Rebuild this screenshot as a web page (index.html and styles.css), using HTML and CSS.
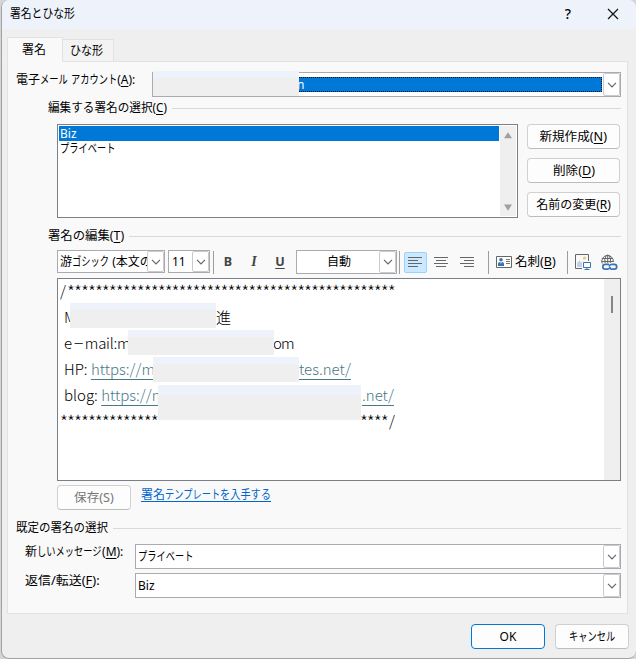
FILE: index.html
```html
<!DOCTYPE html>
<html lang="ja">
<head>
<meta charset="utf-8">
<title>署名とひな形</title>
<link rel="stylesheet" href="styles.css">
</head>
<body>
<div class="dialog">
  <header class="titlebar">
    <span class="title"><span class="t-title">署名とひな形</span></span>
    <span class="help">?</span>
    <svg class="close" width="12" height="12" viewBox="0 0 12 12"><path d="M1 1L11 11M11 1L1 11"/></svg>
  </header>
  <nav class="tabs">
    <div class="tab active">署名</div>
    <div class="tab"><span class="t-tab">ひな形</span></div>
  </nav>
  <main class="panel">
    <div class="row account">
      <label>電子<span class="kana k3">メール</span> <span class="kana k5">アカウント</span>(<u>A</u>):</label>
      <div class="combo">
        <div class="account-value"><span>n</span></div>
        <div class="drop"><svg width="10" height="6" viewBox="0 0 10 6"><path d="M1 .8L5 4.8L9 .8"/></svg></div>
        <div class="mask mask-account"></div>
      </div>
    </div>
    <div class="legend inset pick"><span class="t-pick">編集する署名の選択(<u>C</u>)</span><i></i></div>
    <div class="row signatures">
      <div class="list">
        <div class="items"><div class="item selected">Biz</div><div class="item"><span class="kana k6">プライベート</span></div></div>
        <div class="scroll">
          <svg width="10" height="7" viewBox="0 0 10 7"><path d="M5 0.3L9 6.2H1Z"/></svg>
          <svg width="10" height="7" viewBox="0 0 10 7"><path d="M1 .5H9L5 6.7Z"/></svg>
        </div>
      </div>
      <div class="actions">
        <div class="button"><span class="wide">新規作成(<u>N</u>)</span></div>
        <div class="button"><span class="wide">削除(<u>D</u>)</span></div>
        <div class="button">名前の変更(<u>R</u>)</div>
      </div>
    </div>
    <div class="legend inset edit"><span class="t-edit">署名の編集(<u>T</u>)</span><i></i></div>
    <div class="toolbar">
      <div class="combo font"><span class="value">游<span class="kana k4">ゴシック</span> (本文の</span><div class="drop"><svg width="10" height="6" viewBox="0 0 10 6"><path d="M1 .8L5 4.8L9 .8"/></svg></div></div>
      <div class="combo size"><span class="value">11</span><div class="drop"><svg width="10" height="6" viewBox="0 0 10 6"><path d="M1 .8L5 4.8L9 .8"/></svg></div></div>
      <i class="sep"></i>
      <span class="format bold">B</span><span class="format italic">I</span><span class="format under">U</span>
      <div class="combo color"><span class="value">自動</span><div class="drop"><svg width="10" height="6" viewBox="0 0 10 6"><path d="M1 .8L5 4.8L9 .8"/></svg></div></div>
      <i class="sep"></i>
      <div class="align on"><svg width="15" height="12" viewBox="0 0 15 12"><path d="M0 1.5H14M0 4.5H10M0 7.5H14M0 10.5H10"/></svg></div>
      <div class="align"><svg width="15" height="12" viewBox="0 0 15 12"><path d="M0 1.5H14M2 4.5H12M0 7.5H14M2 10.5H12"/></svg></div>
      <div class="align last"><svg width="15" height="12" viewBox="0 0 15 12"><path d="M0 1.5H14M4 4.5H14M0 7.5H14M4 10.5H14"/></svg></div>
      <i class="sep"></i>
      <svg class="card-icon" width="16" height="12" viewBox="0 0 16 12"><path d="M.5.5H15.5V11.5H.5Z" fill="#fff" stroke="#666"/><circle cx="5" cy="3.7" r="1.8" fill="#3670af"/><path d="M2 10V8Q2 6 4 6H6Q8 6 8 8V10Z" fill="#3670af"/><path d="M4.2 6H5.8L5 8Z" fill="#fff"/><path d="M10 3.5H14M10 5.5H14M10 7.5H14" stroke="#777"/></svg>
      <span class="card-label">名刺(<u>B</u>)</span>
      <i class="sep"></i>
      <svg class="picture-icon" width="17" height="17" viewBox="0 0 17 17"><path d="M7 14.5H.5V.5H13.5V7" fill="none" stroke="#666"/><circle cx="9.5" cy="4" r="1.6" fill="#efc47e"/><path d="M2 13V9L4.5 6.5L7 9V13Z" fill="#c2d1e5"/><path d="M8.5 8.5H15.5V13.5H8.5Z" fill="#fff" stroke="#3973b5"/><path d="M12 14V16M9.5 15.5H14.5" fill="none" stroke="#3973b5"/></svg>
      <svg class="link-icon" width="17" height="17" viewBox="0 0 17 17"><g fill="none" stroke="#666"><path d="M1.2 9.5A5.8 5.8 0 1 1 12.3 8M1.2 4.5H12M.8 7.5H12.2M4.2 9.5Q2.8 5 5.4 1M6.7.5V9M9.2 9Q10.5 5 8 1"/></g><path d="M3 9H16V16H3Z" fill="#f9f9f9"/><g fill="none" stroke="#3973b5" stroke-width="1.7"><path d="M8 10.3H4.2A2.4 2.4 0 0 0 4.2 15.1H6.8Q8.8 15.1 9.4 13M9.3 15.1H13.3A2.4 2.4 0 0 0 13.3 10.3H10.7Q8.7 10.3 8.1 12.4"/></g></svg>
    </div>
    <div class="editor">
      <div class="text">
        <p class="edge"><b class="slash">/</b><b class="stars">***********************************************</b></p>
        <p><span class="c-name">M</span><span>進</span></p>
        <p><span class="c-mail">e<em>－</em>mail:m</span><span class="t-om">om</span></p>
        <p><span class="c-hp">HP: <a>https://m</a></span><a>tes.net/</a></p>
        <p><span class="c-blog">blog: <a>https://m</a></span><a>.net/</a></p>
        <p class="edge"><b class="stars">***********************************************</b><b class="slash">/</b></p>
      </div>
      <div class="editor-scroll"><i></i></div>
      <div class="mask m1"></div><div class="mask m2"></div><div class="mask m3"></div><div class="mask m4"></div>
    </div>
    <div class="row save-row">
      <div class="button save"><span class="wide">保存(S)</span></div>
      <a class="template">署名<span class="kana k6">テンプレート</span><span class="kana tail">を入手する</span></a>
    </div>
    <div class="legend defaults"><span class="t-defaults">既定の署名の選択</span><i></i></div>
    <div class="row choice"><label>新<span class="kana k7">しいメッセージ</span>(<u>M</u>):</label><div class="combo"><span class="value"><span class="kana k6">プライベート</span></span><div class="drop"><svg width="10" height="6" viewBox="0 0 10 6"><path d="M1 .8L5 4.8L9 .8"/></svg></div></div></div>
    <div class="row choice"><label><span class="t-reply">返信/転送(<u>F</u>):</span></label><div class="combo"><span class="value">Biz</span><div class="drop"><svg width="10" height="6" viewBox="0 0 10 6"><path d="M1 .8L5 4.8L9 .8"/></svg></div></div></div>
  </main>
  <footer class="footer">
    <div class="button ok">OK</div>
    <div class="button"><span class="kana k5">キャンセル</span></div>
  </footer>
</div>
</body>
</html>
```
FILE: styles.css
```css
* { box-sizing: border-box; }
body { margin: 0; background: #d5d5d5; color: #000; font: 12px/16px "Noto Sans", "Noto Sans CJK JP", sans-serif; overflow: hidden; }
u { text-underline-offset: 2px; }
svg { display: block; flex: none; }
.row, .toolbar, .legend, .tabs, .titlebar, .footer { display: flex; }

/* Condensed kana runs: each keeps its scaled advance width */
.kana, .t-title, .t-tab, .t-pick, .t-edit, .t-defaults, .t-reply, .wide { display: inline-block; transform-origin: left center; }
.kana { transform: scaleX(.77); vertical-align: top; }
.k3 { width: 28px; }
.k4 { width: 37px; }
.k5 { width: 46px; }
.k6 { width: 55px; }
.k7 { width: 65px; }
.kana.tail { width: 51px; transform: scaleX(.85); }
.t-title { transform: scaleX(.9); }
.t-tab { transform: scaleX(.92); }
.t-pick { transform: scaleX(.968); }
.t-edit { transform: scaleX(1.03); }
.t-defaults { transform: scaleX(.958); }
.t-reply { transform: scaleX(1.08); }
.wide { transform: scaleX(1.05); transform-origin: center; }

.dialog { width: 635px; height: 659px; margin-left: 1px; background: #efefef; border: solid #a3a3a3; border-width: 0 0 1px 1px; border-radius: 8px; overflow: hidden; white-space: nowrap; }
.titlebar { height: 29px; align-items: center; background: #eef2fb; padding: 0 17px 2px 8px; }
.title { flex: 1; }
.help { font-size: 14px; font-weight: 500; margin-right: 36px; }
.close path { fill: none; stroke: #111; stroke-width: 1.2; }
.tabs { height: 33px; padding: 8px 0 0 5px; align-items: flex-end; }
.tab { width: 51px; height: 23px; border: 1px solid #e2e2e2; border-left: 0; background: #f3f3f3; display: flex; align-items: center; justify-content: center; }
.tab.active { width: 56px; height: 25px; background: #f9f9f9; border-left: 1px solid #e2e2e2; border-bottom-color: #f9f9f9; position: relative; z-index: 1; padding-right: 2px; }
.panel { width: 621px; height: 553px; margin: -1px 0 0 5px; padding: 10px 6px 0 8px; background: #f9f9f9; border: 1px solid #e2e2e2; }
label { flex: none; }
.account { height: 26px; }
.account label { width: 136px; }
.combo { flex: 1; display: flex; position: relative; height: 25px; border: 1px solid #a9abb1; background: #fff; padding: 0 0 0 2px; align-items: center; min-width: 0; }
.value { flex: 1; min-width: 0; overflow: hidden; }
.drop { width: 17px; align-self: stretch; border: 1px solid #c9cacd; border-radius: 2px; display: flex; align-items: center; justify-content: center; background: #fff; flex: none; }
.drop path { fill: none; stroke: #666; stroke-width: 1.2; }
.account-value { flex: 1; height: 15px; margin-right: 1px; padding-left: 141px; background: #0078d7; border: 1px dotted #111; color: #fff; line-height: 13px; }
.mask { position: absolute; width: 146px; height: 25px; background: linear-gradient(#eef2fb 7px, #efefef 7px); }
.mask-account { left: 0; top: -2px; }
.legend { align-items: center; height: 16px; gap: 6px; }
.legend i { flex: 1; height: 1px; background: #d9d9d9; }
.inset { margin-left: 32px; }
.pick { margin-top: 2px; }
.pick span { width: 118px; }
.signatures { margin: 8px 1px 0 41px; gap: 9px; height: 94px; }
.list { width: 461px; border: 1px solid #7a7f88; background: #fff; padding: 1px; display: flex; }
.items { flex: 1; }
.item { height: 15px; line-height: 15px; padding-left: 1px; }
.selected { background: #0078d7; color: #fff; }
.scroll { width: 16px; margin-left: 1px; background: #efefef; display: flex; flex-direction: column; justify-content: space-between; align-items: center; padding: 6px 0 5px; }
.scroll path { fill: #a0a0a0; }
.actions { display: flex; flex-direction: column; justify-content: space-between; flex: 1; height: 93px; }
.button { height: 25px; border: 1px solid #d0d0d0; border-bottom-color: #bcbcbc; border-radius: 4px; background: #fdfdfd; display: flex; align-items: center; justify-content: center; }
.edit { margin-top: 10px; }
.edit span { width: 75px; }
.toolbar { margin: 6px 0 0 41px; height: 24px; align-items: center; }
.toolbar .combo { flex: none; height: 23px; margin-bottom: 1px; }
.combo.font { width: 108px; margin-right: 3px; }
.combo.size { width: 42px; margin-right: 3px; padding-left: 3px; }
.toolbar .color { width: 101px; height: 24px; margin: 0 2px 0 2px; }
.color .value { text-align: center; }
.sep { width: 1px; height: 23px; background: #9d9d9d; flex: none; }
.format { width: 26px; text-align: center; color: #444; font-size: 12.5px; font-weight: 700; flex: none; }
.format.bold { margin-left: 1px; }
.italic { font-family: "Liberation Serif", serif; font-style: italic; font-size: 14px; }
.under { text-decoration: underline; text-underline-offset: 2px; margin-right: 1px; }
.align { width: 26px; height: 21px; display: flex; align-items: center; justify-content: center; flex: none; }
.align.on { width: 23px; background: #cce8ff; border: 1px solid #99d1ff; border-radius: 2px; margin: 0 1px 0 4px; }
.align path { stroke: #666; fill: none; }
.align.last { margin-right: 8px; }
.card-icon { margin: 0 3px 0 7px; }
.card-label { width: 52px; font-size: 12.5px; }
.picture-icon { margin: 0 9px 0 7px; }
.editor { position: relative; margin: 4px 0 0 41px; height: 203px; border: 1px solid #7a7f88; background: #fff; display: flex; font: 300 15px/26px "Noto Sans CJK JP", sans-serif; overflow: hidden; }
.text { flex: 1; margin-top: -1px; }
.text p { margin: 0; height: 26px; padding-left: 6px; display: flex; }
.text p.edge { padding-left: 2px; }
.text b { font-weight: 300; }
.text em { font-style: normal; display: inline-block; width: 15px; transform: scaleX(.75); margin: 0 -1px 0 -1px; }
.text .stars { font-size: 18px; letter-spacing: -1px; width: 329px; flex: none; }
.slash { width: 7px; }
.text p > span:first-child { flex: none; overflow: hidden; }
.c-name { width: 152px; }
.c-mail { width: 209px; letter-spacing: -.25px; }
.t-om { letter-spacing: -.8px; }
.c-hp { width: 235px; }
.c-blog { width: 298px; }
.text a { color: #467886; text-decoration: underline; text-underline-offset: 4px; }
.editor-scroll { width: 16px; background: #efefef; padding: 17px 0 0 7px; }
.editor-scroll i { display: block; width: 2px; height: 17px; background: #858585; }
.m1 { left: 12px; top: 24px; }
.m2 { left: 70px; top: 51px; }
.m3 { left: 95px; top: 78px; }
.m4 { left: 100px; top: 106px; width: 203px; height: 35px; background: linear-gradient(#eef2fb 10px, #efefef 10px); }
.save-row { margin: 4px 0 0 41px; gap: 10px; align-items: flex-start; }
.save { width: 74px; color: #777; }
.template { color: #0066cc; border-bottom: 1px solid #0066cc; height: 15px; line-height: 16px; margin-top: 2px; }
.defaults { margin-top: 10px; }
.defaults span { width: 91px; }
.choice { padding-left: 9px; margin-top: 8px; }
.choice + .choice { margin-top: 4px; }
.choice label { width: 110px; }
.footer { justify-content: flex-end; gap: 10px; padding: 10px 7px 0 0; }
.footer .button { width: 74px; }
.footer .ok { border-color: #0078d7; }
```
